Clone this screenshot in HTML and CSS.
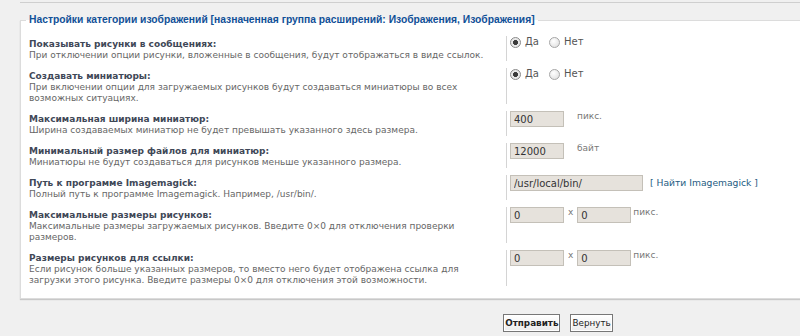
FILE: index.html
```html
<!DOCTYPE html>
<html>
<head>
<meta charset="utf-8">
<link rel="stylesheet" href="styles.css">
</head>
<body>
<div class="page">
  <div class="prev"></div>
  <fieldset class="panel">
    <legend>Настройки категории изображений [назначенная группа расширений: Изображения, Изображения]</legend>
    <div class="row">
      <div class="dt"><b>Показывать рисунки в сообщениях:</b><span>При отключении опции рисунки, вложенные в сообщения, будут отображаться в виде ссылок.</span></div>
      <div class="dd radios"><label><input type="radio" name="a" checked> Да</label><label><input type="radio" name="a"> Нет</label></div>
    </div>
    <div class="row">
      <div class="dt"><b>Создавать миниатюры:</b><span>При включении опции для загружаемых рисунков будут создаваться миниатюры во всех<br>возможных ситуациях.</span></div>
      <div class="dd radios"><label><input type="radio" name="b" checked> Да</label><label><input type="radio" name="b"> Нет</label></div>
    </div>
    <div class="row">
      <div class="dt"><b>Максимальная ширина миниатюр:</b><span>Ширина создаваемых миниатюр не будет превышать указанного здесь размера.</span></div>
      <div class="dd"><input class="txt" type="text" value="400"><span class="unit far">пикс.</span></div>
    </div>
    <div class="row">
      <div class="dt"><b>Минимальный размер файлов для миниатюр:</b><span>Миниатюры не будут создаваться для рисунков меньше указанного размера.</span></div>
      <div class="dd"><input class="txt" type="text" value="12000"><span class="unit far">байт</span></div>
    </div>
    <div class="row">
      <div class="dt"><b>Путь к программе Imagemagick:</b><span>Полный путь к программе Imagemagick. Например, /usr/bin/.</span></div>
      <div class="dd"><input class="txt wide" type="text" value="/usr/local/bin/"><a class="find" href="#">[ Найти Imagemagick ]</a></div>
    </div>
    <div class="row">
      <div class="dt"><b>Максимальные размеры рисунков:</b><span>Максимальные размеры загружаемых рисунков. Введите 0×0 для отключения проверки<br>размеров.</span></div>
      <div class="dd"><input class="txt" type="text" value="0"><span class="x">x</span><input class="txt" type="text" value="0"><span class="unit">пикс.</span></div>
    </div>
    <div class="row last">
      <div class="dt"><b>Размеры рисунков для ссылки:</b><span>Если рисунок больше указанных размеров, то вместо него будет отображена ссылка для<br>загрузки этого рисунка. Введите размеры 0×0 для отключения этой возможности.</span></div>
      <div class="dd"><input class="txt" type="text" value="0"><span class="x">x</span><input class="txt" type="text" value="0"><span class="unit">пикс.</span></div>
    </div>
  </fieldset>
  <div class="buttons">
    <button class="btn main" type="button">Отправить</button>
    <button class="btn" type="button">Вернуть</button>
  </div>
</div>
</body>
</html>
```

FILE: styles.css
```css
html, body {
  margin: 0;
  padding: 0;
  overflow: hidden;
  background: #f0f0f0;
}

.page {
  width: 1120px;
  font-family: "DejaVu Sans", Verdana, sans-serif;
}

.prev {
  height: 2px;
  margin-left: 20px;
  border-bottom: 1px solid #cfcfcf;
}

.panel {
  box-sizing: border-box;
  width: 1076px;
  margin: 10px 0 0 20px;
  padding: 9px 8px 12px;
  border: 1px solid #dcdcdc;
  background: #fff;
  box-shadow: 0 1px 1px #c8c8c8;
  min-width: 0;
}

.panel legend {
  margin-left: -3px;
  padding: 0 3px;
  font-family: "Liberation Sans", Arial, sans-serif;
  font-size: 10.3px;
  font-weight: bold;
  line-height: 14px;
  color: #115098;
}

.row {
  display: grid;
  grid-template-columns: 477px 1fr;
  margin-bottom: 7px;
}

.row.last {
  margin-bottom: 0;
}

.dt {
  padding-top: 2px;
  font-size: 9px;
}

.dt b {
  display: block;
  line-height: 12px;
  color: #3f4857;
}

.dt span {
  display: block;
  line-height: 11px;
  color: #666;
}

.dd {
  display: flex;
  align-items: flex-start;
  border-left: 1px solid #d4d4d4;
  padding: 0 0 0 3px;
  font-size: 9px;
  color: #666;
}

.radios label {
  display: flex;
  align-items: center;
  margin-right: 10px;
  font-size: 10px;
  color: #555;
  line-height: 12px;
}

.radios input {
  appearance: none;
  -webkit-appearance: none;
  width: 11px;
  height: 11px;
  margin: 0 4px 0 0;
  border: 1px solid #a6a6a6;
  border-radius: 50%;
  background: radial-gradient(circle at 40% 35%, #ffffff 0%, #e6e6e6 70%, #d6d6d6 100%);
  box-sizing: border-box;
}

.radios input:checked {
  background: radial-gradient(circle, #3a3a3a 0, #3a3a3a 2.2px, #e8e8e8 2.8px, #e8e8e8 100%);
  border-color: #8a8a8a;
}

.txt {
  box-sizing: border-box;
  width: 54px;
  height: 16px;
  margin: 0;
  padding: 1px 3px;
  border: 1px solid #c4c0b8;
  background: #e6e2dc;
  font-family: "DejaVu Sans", Verdana, sans-serif;
  font-size: 10px;
  color: #333;
}

.txt.wide {
  width: 133px;
}

.unit {
  margin-left: 2px;
  line-height: 10px;
  font-size: 9px;
  color: #777;
}

.unit.far {
  margin-left: 13px;
}

.x {
  margin: 0 4px 0 4px;
  line-height: 10px;
  font-size: 9px;
  color: #777;
}

.find {
  margin: 2px 0 0 7px;
  font-size: 9.2px;
  color: #1d5b82;
  text-decoration: none;
  line-height: 12px;
}

.buttons {
  width: 1076px;
  margin: 15px 0 0 20px;
  display: flex;
  justify-content: center;
  gap: 10px;
}

.btn {
  height: 18px;
  padding: 0 1px;
  border: 1px solid #777;
  background: linear-gradient(#ffffff, #ececec);
  font-family: "DejaVu Sans", Verdana, sans-serif;
  font-size: 8.8px;
  color: #222;
  box-shadow: inset 0 0 0 1px #fff;
}

.btn.main {
  font-weight: bold;
}
```
